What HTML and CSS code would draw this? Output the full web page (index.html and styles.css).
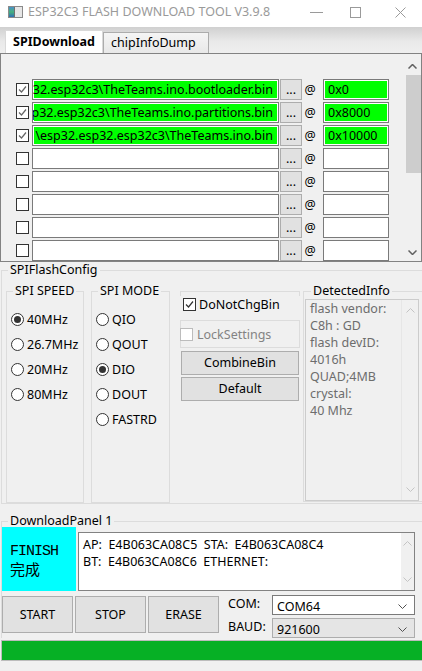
FILE: index.html
```html
<!DOCTYPE html>
<html lang="en">
<head>
  <meta charset="UTF-8" />
  <meta name="viewport" content="width=device-width, initial-scale=1.0"/>
  <title>ESP32C3 FLASH DOWNLOAD TOOL V3.9.8</title>
  <link rel="stylesheet" href="styles.css">
</head>
<body>

<div class="window">

  <div class="titlebar">
    <svg class="app-icon" width="15" height="12" viewBox="0 0 15 12">
      <defs>
        <linearGradient id="icoFill" x1="0" y1="0" x2="0" y2="1">
          <stop offset="0" stop-color="#4a90c8"/>
          <stop offset="0.5" stop-color="#45b07c"/>
          <stop offset="1" stop-color="#2f6db4"/>
        </linearGradient>
      </defs>
      <rect x="0.5" y="0.5" width="14" height="11" fill="#e6e6e6" stroke="#8a8a8a"/>
      <rect x="1" y="1" width="5" height="10" fill="url(#icoFill)"/>
      <line x1="6.5" y1="1" x2="6.5" y2="11" stroke="#707070"/>
    </svg>
    <span class="title">ESP32C3 FLASH DOWNLOAD TOOL V3.9.8</span>
    <div class="caption">
      <span class="cap-btn cap-min">
        <svg width="13" height="1"><line x1="0" y1="0.5" x2="13" y2="0.5" stroke="#9a9a9a"/></svg>
      </span>
      <span class="cap-btn cap-max">
        <svg width="11" height="11"><rect x="0.5" y="0.5" width="10" height="10" fill="none" stroke="#9a9a9a"/></svg>
      </span>
      <span class="cap-btn cap-close">
        <svg width="11" height="11"><path d="M0.5 0.5L10.5 10.5M10.5 0.5L0.5 10.5" stroke="#9a9a9a" fill="none"/></svg>
      </span>
    </div>
  </div>

  <div class="tabs">
    <div class="tab active">SPIDownload</div>
    <div class="tab">chipInfoDump</div>
  </div>

  <!-- bin files + flash addresses -->
  <div class="files">
    <div class="file-list">
      <div class="file-row">
        <span class="check on"><svg viewBox="0 0 11 11"><path d="M2 5.5L4.5 8L9 2.5"/></svg></span>
        <div class="path loaded"><span>32.esp32c3\TheTeams.ino.bootloader.bin</span></div>
        <div class="dots">...</div>
        <span class="at">@</span>
        <div class="addr loaded">0x0</div>
      </div>
      <div class="file-row">
        <span class="check on"><svg viewBox="0 0 11 11"><path d="M2 5.5L4.5 8L9 2.5"/></svg></span>
        <div class="path loaded"><span>p32.esp32c3\TheTeams.ino.partitions.bin</span></div>
        <div class="dots">...</div>
        <span class="at">@</span>
        <div class="addr loaded">0x8000</div>
      </div>
      <div class="file-row">
        <span class="check on"><svg viewBox="0 0 11 11"><path d="M2 5.5L4.5 8L9 2.5"/></svg></span>
        <div class="path loaded"><span>\esp32.esp32.esp32c3\TheTeams.ino.bin</span></div>
        <div class="dots">...</div>
        <span class="at">@</span>
        <div class="addr loaded">0x10000</div>
      </div>
      <div class="file-row">
        <span class="check"></span>
        <div class="path"></div>
        <div class="dots">...</div>
        <span class="at">@</span>
        <div class="addr"></div>
      </div>
      <div class="file-row">
        <span class="check"></span>
        <div class="path"></div>
        <div class="dots">...</div>
        <span class="at">@</span>
        <div class="addr"></div>
      </div>
      <div class="file-row">
        <span class="check"></span>
        <div class="path"></div>
        <div class="dots">...</div>
        <span class="at">@</span>
        <div class="addr"></div>
      </div>
      <div class="file-row">
        <span class="check"></span>
        <div class="path"></div>
        <div class="dots">...</div>
        <span class="at">@</span>
        <div class="addr"></div>
      </div>
      <div class="file-row">
        <span class="check"></span>
        <div class="path"></div>
        <div class="dots">...</div>
        <span class="at">@</span>
        <div class="addr"></div>
      </div>
    </div>
    <div class="vscroll">
      <span class="arrow"><svg width="9" height="5"><polyline points="0.5,4.5 4.5,0.5 8.5,4.5" fill="none" stroke="#606060" stroke-width="1.5"/></svg></span>
      <div class="thumb"></div>
      <div class="track"></div>
      <span class="arrow"><svg width="9" height="5"><polyline points="0.5,0.5 4.5,4.5 8.5,0.5" fill="none" stroke="#606060" stroke-width="1.5"/></svg></span>
    </div>
  </div>

  <fieldset class="group flash-config">
    <legend>SPIFlashConfig</legend>
    <div class="config-cols">

      <fieldset class="group speed">
        <legend>SPI SPEED</legend>
        <div class="radio-list">
          <label class="radio-item"><span class="radio on"></span>40MHz</label>
          <label class="radio-item"><span class="radio"></span>26.7MHz</label>
          <label class="radio-item"><span class="radio"></span>20MHz</label>
          <label class="radio-item"><span class="radio"></span>80MHz</label>
        </div>
      </fieldset>

      <fieldset class="group mode">
        <legend>SPI MODE</legend>
        <div class="radio-list">
          <label class="radio-item"><span class="radio"></span>QIO</label>
          <label class="radio-item"><span class="radio"></span>QOUT</label>
          <label class="radio-item"><span class="radio on"></span>DIO</label>
          <label class="radio-item"><span class="radio"></span>DOUT</label>
          <label class="radio-item"><span class="radio"></span>FASTRD</label>
        </div>
      </fieldset>

      <div class="options">
        <div class="notch"></div>
        <label class="opt-check">
          <span class="check on dark"><svg viewBox="0 0 11 11"><path d="M2 5.5L4.5 8L9 2.5"/></svg></span>
          DoNotChgBin
        </label>
        <div class="lock-box">
          <span class="check off"></span>
          <span class="lock-label">LockSettings</span>
        </div>
        <div class="opt-btn">CombineBin</div>
        <div class="opt-btn">Default</div>
      </div>

      <fieldset class="group detected">
        <legend>DetectedInfo</legend>
        <div class="info">
          <div class="info-text">flash vendor:<br>C8h : GD<br>flash devID:<br>4016h<br>QUAD;4MB<br>crystal:<br>40 Mhz</div>
          <div class="info-scroll">
            <span class="arrow"><svg width="9" height="5"><polyline points="0.5,4.5 4.5,0.5 8.5,4.5" fill="none" stroke="#c4c4c4"/></svg></span>
            <span class="arrow"><svg width="9" height="5"><polyline points="0.5,0.5 4.5,4.5 8.5,0.5" fill="none" stroke="#c4c4c4"/></svg></span>
          </div>
        </div>
      </fieldset>

    </div>
  </fieldset>

  <fieldset class="group download">
    <legend>DownloadPanel 1</legend>
    <div class="dl-top">
      <div class="status">
        <span class="status-en">FINISH</span>
        <span class="status-cn">完成</span>
      </div>
      <div class="log">
        <div class="log-text">AP:  E4B063CA08C5  STA:  E4B063CA08C4
BT:  E4B063CA08C6  ETHERNET:</div>
        <div class="log-scroll">
          <span class="arrow"><svg width="9" height="5"><polyline points="0.5,4.5 4.5,0.5 8.5,4.5" fill="none" stroke="#c4c4c4"/></svg></span>
          <span class="arrow"><svg width="9" height="5"><polyline points="0.5,0.5 4.5,4.5 8.5,0.5" fill="none" stroke="#c4c4c4"/></svg></span>
        </div>
      </div>
    </div>
    <div class="dl-bottom">
      <div class="big-btn">START</div>
      <div class="big-btn">STOP</div>
      <div class="big-btn">ERASE</div>
      <div class="port">
        <div class="port-row">
          <span class="port-label">COM:</span>
          <div class="select">
            <span>COM64</span>
            <svg width="9" height="5"><polyline points="0.5,0.5 4.5,4.5 8.5,0.5" fill="none" stroke="#505050"/></svg>
          </div>
        </div>
        <div class="port-row">
          <span class="port-label">BAUD:</span>
          <div class="select baud">
            <span>921600</span>
            <svg width="9" height="5"><polyline points="0.5,0.5 4.5,4.5 8.5,0.5" fill="none" stroke="#505050"/></svg>
          </div>
        </div>
      </div>
    </div>
  </fieldset>

  <div class="progress">
    <div class="bar" style="width: 100%"></div>
  </div>

</div>

</body>
</html>
```

FILE: styles.css
```css
body {
  margin: 0;
  background-color: #f0f0f0;
  font-family: "Noto Sans", "Noto Sans CJK SC", sans-serif;
  font-size: 12.5px;
  color: #000;
}

.window {
  width: 422px;
  height: 671px;
  overflow: hidden;
  display: flex;
  flex-direction: column;
}

/* title bar */

.titlebar {
  height: 27px;
  flex-shrink: 0;
  background-color: #fff;
  display: flex;
  align-items: flex-start;
}

.app-icon {
  margin: 6px 0 0 8px;
}

.title {
  margin: 4px 0 0 5px;
  line-height: 16px;
  color: #9a9a9a;
}

.caption {
  margin-left: auto;
  display: flex;
}

.cap-btn {
  height: 24px;
  display: flex;
  align-items: center;
  justify-content: center;
}

.cap-min { width: 32px; }
.cap-max { width: 46px; }
.cap-close { width: 44px; }

/* tabs */

.tabs {
  height: 26px;
  flex-shrink: 0;
  display: flex;
  align-items: flex-end;
  padding-left: 5px;
  background: linear-gradient(#d0d0d0, #e9e9e9 55%, #efefef);
}

.tab {
  box-sizing: border-box;
  height: 21px;
  width: 106px;
  padding: 0 7px;
  border: 1px solid #acacac;
  border-bottom: none;
  background: linear-gradient(#f5f5f5, #e8e8e8);
  line-height: 20px;
}

.tab.active {
  height: 23px;
  width: 98px;
  font-weight: bold;
  background: #fff;
  border-color: #d9d9d9;
  line-height: 22px;
}

/* file list */

.files {
  flex-shrink: 0;
  box-sizing: border-box;
  height: 209px;
  border: 1px solid #828282;
  display: flex;
}

.file-list {
  flex: 1;
  padding-top: 24px;
  overflow: hidden;
}

.file-row {
  height: 23px;
  display: flex;
  align-items: center;
}

.check {
  box-sizing: border-box;
  width: 13px;
  height: 13px;
  flex-shrink: 0;
  border: 1px solid #333;
  background-color: #fff;
}

.check svg {
  display: block;
  width: 11px;
  height: 11px;
  fill: none;
  stroke: #666;
  stroke-width: 1.2;
}

.check.dark svg {
  stroke: #333;
}

.check.off {
  border-color: #bcbcbc;
}

.file-row .check {
  margin-left: 15px;
}

.path,
.addr {
  box-sizing: border-box;
  height: 21px;
  border: 1px solid #7a7a7a;
  background-color: #fff;
  overflow: hidden;
  white-space: pre;
  line-height: 19px;
}

.path {
  width: 247px;
  margin-left: 3px;
  padding: 0 5px 0 2px;
  display: flex;
  justify-content: flex-end;
}

.addr {
  width: 66px;
  margin-left: 7px;
  padding-left: 4px;
}

.loaded {
  background-color: #00ff00;
  box-shadow: inset 0 0 0 1px #fff;
}

.dots {
  box-sizing: border-box;
  width: 22px;
  height: 21px;
  margin-left: 1px;
  border: 1px solid #adadad;
  background-color: #e1e1e1;
  text-align: center;
  line-height: 19px;
}

.at {
  width: 12px;
  margin-left: 2px;
  text-align: center;
}

.vscroll {
  width: 17px;
  padding-top: 4px;
  display: flex;
  flex-direction: column;
}

.arrow {
  height: 17px;
  display: flex;
  align-items: center;
  justify-content: center;
  flex-shrink: 0;
}

.arrow svg {
  display: block;
}

.thumb {
  height: 98px;
  margin-left: 2px;
  background-color: #cdcdcd;
}

.track {
  flex: 1;
}

/* group boxes */

.group {
  box-sizing: border-box;
  min-width: 0;
  margin: 0;
  padding: 0;
  border: 1px solid #dcdcdc;
}

.group > legend {
  padding: 0 2px;
  margin-left: 6px;
  line-height: 16px;
}

.flash-config {
  flex-shrink: 0;
  margin-left: 1px;
  padding-top: 5px;
  border-right: none;
}

.config-cols {
  display: flex;
  align-items: flex-start;
}

.speed {
  width: 78px;
  margin-left: 4px;
}

.mode {
  width: 79px;
  margin-left: 7px;
}

.radio-list {
  height: 203px;
  box-sizing: border-box;
  padding: 8px 0 0 4px;
}

.radio-item {
  height: 25px;
  display: flex;
  align-items: center;
}

.radio {
  box-sizing: border-box;
  width: 13px;
  height: 13px;
  margin-right: 3px;
  border: 1px solid #333;
  border-radius: 50%;
  background-color: #fff;
  display: flex;
  align-items: center;
  justify-content: center;
}

.radio.on::after {
  content: "";
  width: 7px;
  height: 7px;
  border-radius: 50%;
  background-color: #333;
}

.options {
  width: 120px;
  margin: 8px 0 0 10px;
}

.notch {
  box-sizing: border-box;
  height: 5px;
  border: 1px solid #dcdcdc;
  border-bottom: none;
}

.opt-check {
  height: 17px;
  padding-left: 3px;
  display: flex;
  align-items: center;
}

.opt-check .check {
  margin-right: 3px;
}

.lock-box {
  box-sizing: border-box;
  height: 28px;
  margin-top: 7px;
  border: 1px solid #dcdcdc;
  display: flex;
  align-items: center;
}

.lock-box .check {
  margin: 1px 0 0 -1px;
}

.lock-label {
  margin-left: 4px;
  color: #838383;
}

.opt-btn {
  box-sizing: border-box;
  width: 118px;
  height: 24px;
  margin: 3px 0 0 1px;
  border: 1px solid #adadad;
  background-color: #e1e1e1;
  text-align: center;
  line-height: 22px;
}

.opt-btn + .opt-btn {
  margin-top: 2px;
}

.detected {
  flex: 1;
  margin-left: 3px;
  border-right: none;
}

.detected > legend {
  margin-left: 7px;
}

.info {
  box-sizing: border-box;
  width: 114px;
  height: 202px;
  margin-left: 1px;
  border: 1px solid #cccccc;
  display: flex;
}

.info-text {
  flex: 1;
  padding-left: 4px;
  line-height: 17px;
  color: #6d6d6d;
}

.info-scroll {
  width: 16px;
  padding: 2px 0;
  border-left: 1px solid #e6e6e6;
  display: flex;
  flex-direction: column;
  justify-content: space-between;
}

/* download panel */

.download {
  flex-shrink: 0;
  margin: 9px 0 0 1px;
  border-right: none;
  border-bottom: none;
}

.dl-top {
  display: flex;
  margin-top: -2px;
}

.status {
  box-sizing: border-box;
  width: 74px;
  height: 64px;
  padding: 1px 0 0 8px;
  background-color: #00ffff;
  display: flex;
  flex-direction: column;
  justify-content: center;
}

.status-en {
  font-family: "Liberation Mono", monospace;
  font-size: 15px;
  letter-spacing: -1px;
  line-height: 17px;
}

.status-cn {
  font-family: "Noto Sans CJK SC", sans-serif;
  font-size: 15px;
  line-height: 17px;
}

.log {
  box-sizing: border-box;
  width: 337px;
  height: 59px;
  margin: 5px 0 0 2px;
  border: 1px solid #828282;
  background-color: #fff;
  display: flex;
}

.log-text {
  flex: 1;
  padding: 3px 0 0 4px;
  line-height: 17px;
  white-space: pre;
}

.log-scroll {
  width: 13px;
  padding: 2px 0;
  background-color: #f0f0f0;
  display: flex;
  flex-direction: column;
  justify-content: space-between;
}

.dl-bottom {
  display: flex;
  margin-top: 5px;
}

.big-btn {
  box-sizing: border-box;
  width: 71px;
  height: 37px;
  border: 1px solid #adadad;
  background-color: #e1e1e1;
  display: flex;
  align-items: center;
  justify-content: center;
}

.big-btn + .big-btn {
  margin-left: 2px;
}

.port {
  margin: -1px 0 0 9px;
}

.port-row {
  height: 20px;
  display: flex;
  align-items: center;
}

.port-row + .port-row {
  margin-top: 3px;
}

.port-label {
  width: 44px;
  margin-top: -3px;
}

.select {
  box-sizing: border-box;
  width: 143px;
  height: 20px;
  padding: 2px 7px 0 4px;
  border: 1px solid #7a7a7a;
  background-color: #fff;
  display: flex;
  align-items: center;
  justify-content: space-between;
}

.select.baud {
  background-color: #e5e5e5;
  border-color: #adadad;
}

/* progress */

.progress {
  box-sizing: border-box;
  height: 21px;
  margin: 2px 0 0 1px;
  border: 1px solid #bcbcbc;
  border-right: none;
  background-color: #e6e6e6;
  flex-shrink: 0;
}

.bar {
  height: 100%;
  background-color: #06b025;
}
```
